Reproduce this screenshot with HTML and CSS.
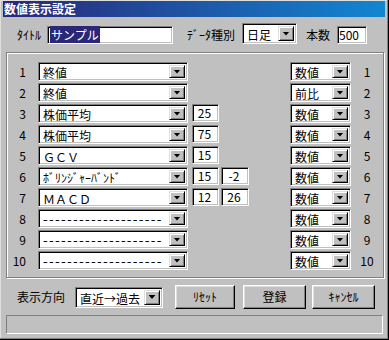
FILE: index.html
```html
<!DOCTYPE html>
<html lang="ja">
<head>
<meta charset="utf-8">
<title>数値表示設定</title>
<link rel="stylesheet" href="styles.css">
</head>
<body>
<div class="win">
  <div class="titlebar">数値表示設定</div>
  <div class="toprow">
    <span class="lbl lbl-title">ﾀｲﾄﾙ</span>
    <div class="edit edit-title"><span class="hl">サンプル</span></div>
    <span class="lbl lbl-kind">ﾃﾞｰﾀ種別</span>
    <div class="combo combo-kind"><span class="val">日足</span><span class="dd"></span></div>
    <span class="lbl lbl-count">本数</span>
    <div class="edit edit-count">500</div>
  </div>
  <div class="group">
    <div class="row"><span class="num">1</span><div class="combo main"><span class="val">終値</span><span class="dd"></span></div><div class="combo unit"><span class="val">数値</span><span class="dd"></span></div><span class="num2">1</span></div>
    <div class="row"><span class="num">2</span><div class="combo main"><span class="val">終値</span><span class="dd"></span></div><div class="combo unit"><span class="val">前比</span><span class="dd"></span></div><span class="num2">2</span></div>
    <div class="row"><span class="num">3</span><div class="combo main"><span class="val">株価平均</span><span class="dd"></span></div><div class="edit n1">25</div><div class="combo unit"><span class="val">数値</span><span class="dd"></span></div><span class="num2">3</span></div>
    <div class="row"><span class="num">4</span><div class="combo main"><span class="val">株価平均</span><span class="dd"></span></div><div class="edit n1">75</div><div class="combo unit"><span class="val">数値</span><span class="dd"></span></div><span class="num2">4</span></div>
    <div class="row"><span class="num">5</span><div class="combo main"><span class="val">ＧＣＶ</span><span class="dd"></span></div><div class="edit n1">15</div><div class="combo unit"><span class="val">数値</span><span class="dd"></span></div><span class="num2">5</span></div>
    <div class="row"><span class="num">6</span><div class="combo main"><span class="val">ﾎﾞﾘﾝｼﾞｬｰﾊﾞﾝﾄﾞ</span><span class="dd"></span></div><div class="edit n1">15</div><div class="edit n2">-2</div><div class="combo unit"><span class="val">数値</span><span class="dd"></span></div><span class="num2">6</span></div>
    <div class="row"><span class="num">7</span><div class="combo main"><span class="val">ＭＡＣＤ</span><span class="dd"></span></div><div class="edit n1">12</div><div class="edit n2">26</div><div class="combo unit"><span class="val">数値</span><span class="dd"></span></div><span class="num2">7</span></div>
    <div class="row"><span class="num">8</span><div class="combo main"><span class="val dash">--------------------</span><span class="dd"></span></div><div class="combo unit"><span class="val">数値</span><span class="dd"></span></div><span class="num2">8</span></div>
    <div class="row"><span class="num">9</span><div class="combo main"><span class="val dash">--------------------</span><span class="dd"></span></div><div class="combo unit"><span class="val">数値</span><span class="dd"></span></div><span class="num2">9</span></div>
    <div class="row"><span class="num">10</span><div class="combo main"><span class="val dash">--------------------</span><span class="dd"></span></div><div class="combo unit"><span class="val">数値</span><span class="dd"></span></div><span class="num2">10</span></div>
  </div>
  <div class="bottomrow">
    <span class="lbl lbl-dir">表示方向</span>
    <div class="combo dir"><span class="val">直近→過去</span><span class="dd"></span></div>
    <button class="btn btn1">ﾘｾｯﾄ</button>
    <button class="btn btn2">登録</button>
    <button class="btn btn3">ｷｬﾝｾﾙ</button>
  </div>
  <div class="status"></div>
</div>
</body>
</html>
```
FILE: styles.css
```css
* { box-sizing: border-box; }
body {
  margin: 0;
  font-family: "Noto Sans CJK JP", sans-serif;
  font-size: 12px;
  color: #000;
}
.win {
  width: 389px;
  height: 340px;
  background: #c0c0c0;
  border-right: 1px solid #000;
  border-bottom: 1px solid #000;
  box-shadow: inset -1px -1px #808080, inset 1px 1px #dfdfdf;
  padding: 1px 3px 0 3px;
}
.titlebar {
  height: 16px;
  background: linear-gradient(to right, #2a2678, #1286d2);
  color: #fff;
  font-weight: bold;
  line-height: 16px;
  padding-left: 1px;
  white-space: nowrap;
}
.toprow {
  display: flex;
  align-items: flex-end;
  margin-top: 6px;
  height: 21px;
}
.lbl { line-height: 18px; white-space: nowrap; }
.lbl-title { margin-left: 14px; width: 30px; }
.lbl-kind { margin-left: 14px; width: 55px; }
.lbl-count { margin-left: 9px; width: 31px; }

.edit {
  background: #fff;
  border: 1px solid;
  border-color: #808080 #fff #fff #808080;
  box-shadow: inset 1px 1px #000, inset -1px -1px #c0c0c0;
  height: 18px;
  line-height: 16px;
  padding-left: 2px;
  white-space: nowrap;
}
.edit-title { width: 126px; }
.edit-title .hl {
  background: #2a2678;
  color: #fff;
  padding: 0 1px;
}
.edit-count { width: 30px; padding-left: 1px; }

.combo {
  display: flex;
  background: #fff;
  border: 1px solid;
  border-color: #808080 #fff #fff #808080;
  box-shadow: inset 1px 1px #000, inset -1px -1px #c0c0c0;
  padding: 2px;
  height: 19px;
}
.combo .val {
  flex: 1;
  padding-left: 2px;
  line-height: 15px;
  white-space: nowrap;
}
.combo .val.dash {
  font-family: "DejaVu Sans", sans-serif;
  font-size: 13px;
  letter-spacing: 1.3px;
}
.dd {
  width: 16px;
  flex: none;
  background: #c0c0c0;
  border: 1px solid;
  border-color: #dfdfdf #000 #000 #dfdfdf;
  box-shadow: inset 1px 1px #fff, inset -1px -1px #808080;
  display: flex;
  align-items: center;
  justify-content: center;
}
.dd::after {
  content: "";
  width: 7px;
  height: 4px;
  background: #000;
  clip-path: polygon(0 0, 7px 0, 3.5px 4px);
}
.combo-kind { width: 55px; height: 21px; }
.combo-kind .val { line-height: 17px; }

.group {
  margin: 8px 0 0 3px;
  width: 378px;
  height: 226px;
  border: 1px solid #808080;
  box-shadow: inset 1px 1px #fff, 1px 1px #fff;
  padding-top: 9px;
}
.row {
  display: flex;
  align-items: flex-start;
  height: 19px;
}
.row + .row { margin-top: 2px; }
.num { width: 19px; text-align: right; line-height: 19px; }
.combo.main { margin-left: 12px; width: 150px; }
.edit.n1 { margin-left: 4px; width: 27px; text-align: center; padding: 0 2px 0 0; }
.edit.n2 { margin-left: 2px; width: 28px; text-align: center; padding: 0 2px 0 0; }
.combo.unit { margin-left: auto; width: 61px; }
.num2 { width: 32px; text-align: center; line-height: 19px; }

.bottomrow {
  display: flex;
  align-items: center;
  margin-top: 7px;
  height: 24px;
}
.lbl-dir { margin-left: 14px; width: 58px; }
.combo.dir { width: 88px; height: 21px; }
.combo.dir .val { line-height: 17px; }
.btn {
  height: 24px;
  background: #c0c0c0;
  border: 1px solid;
  border-color: #fff #000 #000 #fff;
  box-shadow: inset -1px -1px #808080, inset 1px 1px #dfdfdf;
  font-family: "Noto Sans CJK JP", sans-serif;
  font-size: 12px;
  color: #000;
  padding: 0;
  line-height: 20px;
}
.btn1 { margin-left: 12px; width: 60px; }
.btn2 { margin-left: 8px; width: 63px; }
.btn3 { margin-left: 6px; width: 63px; }

.status {
  margin: 6px 0 0 3px;
  width: 377px;
  height: 19px;
  border: 1px solid;
  border-color: #808080 #fff #fff #808080;
}
```
